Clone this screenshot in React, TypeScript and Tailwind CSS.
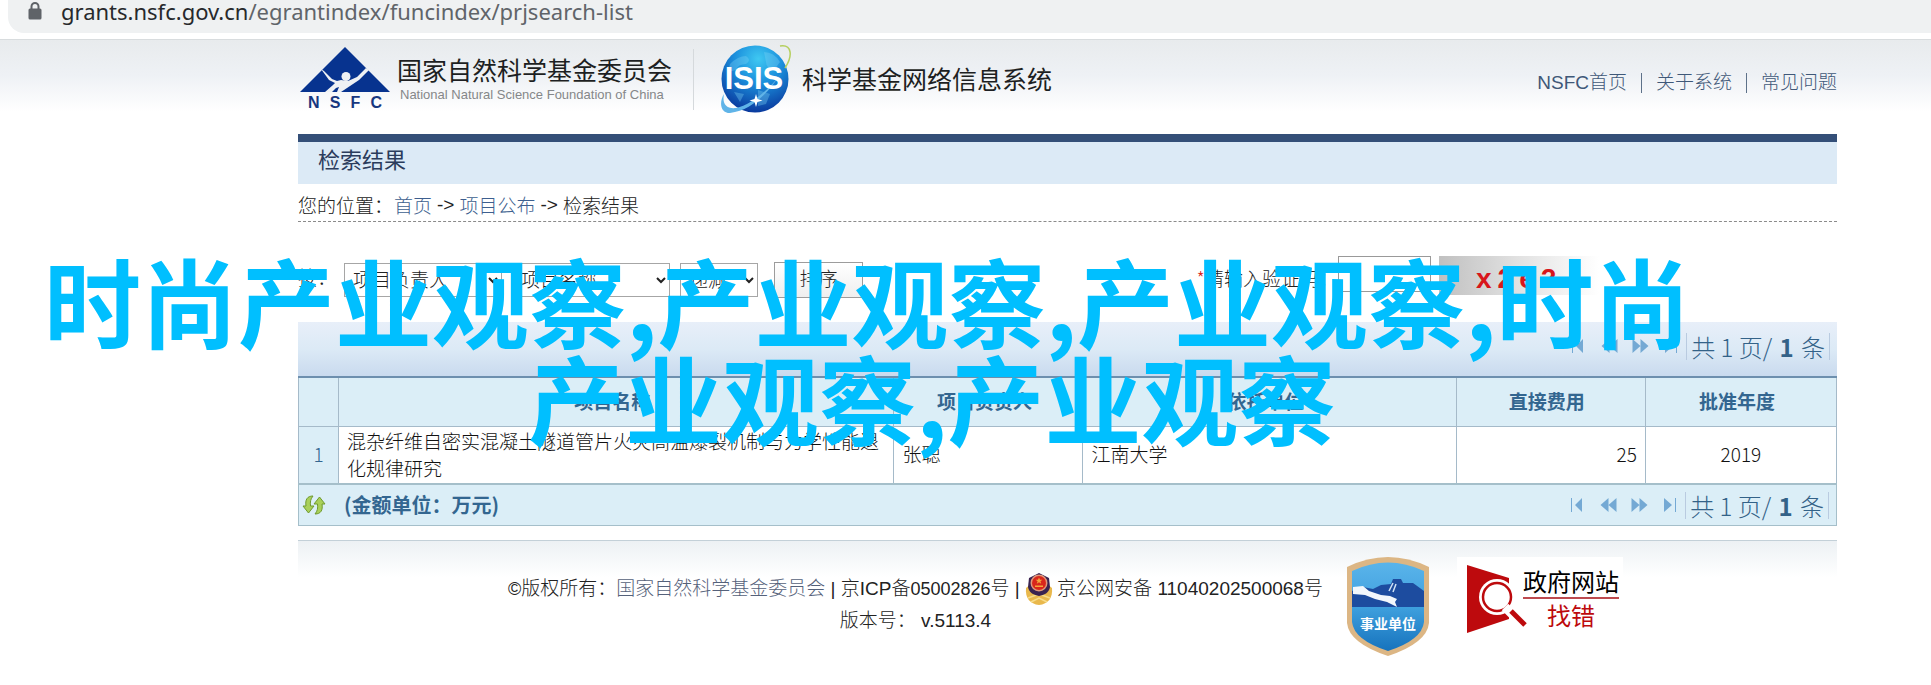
import type { ReactNode } from "react";

const cjk = "font-['Noto_Sans_CJK_SC',sans-serif]";
const arial = "font-['Liberation_Sans','Noto_Sans_CJK_SC',sans-serif]";

const columns = [
  { label: "", width: "w-10" },
  { label: "项目名称", width: "w-[555px]" },
  { label: "项目负责人", width: "w-[189px]" },
  { label: "依托单位", width: "w-[373px]" },
  { label: "直接费用", width: "w-[189px]" },
  { label: "批准年度", width: "w-[191px]" },
];

const rows = [
  {
    id: 1,
    name: "混杂纤维自密实混凝土隧道管片火灾高温爆裂机制与力学性能退化规律研究",
    leader: "张聪",
    unit: "江南大学",
    cost: 25,
    year: 2019,
  },
];

function LockIcon() {
  return (
    <svg width="14" height="18" viewBox="0 0 14 18" aria-hidden="true">
      <path d="M3.5 8V4.5a3.5 3.5 0 0 1 7 0V8" fill="none" stroke="#5f6368" strokeWidth="2" />
      <rect x="0.5" y="6.5" width="13" height="11" rx="1.5" fill="#5f6368" />
    </svg>
  );
}

function NsfcLogo() {
  return (
    <div className="w-[90px] shrink-0">
      <svg width="90" height="46" viewBox="0 0 90 46" aria-hidden="true">
        <path d="M45 0 L90 45 H0 Z" fill="#07338f" />
        <path d="M21 22 L24 24 L32 32 L37 34 L41 33 L48 34 L57 30 L66 21 L69 23 L59 33 L41 45 H37 L39 40 L36 41 L32 45 H25 L33 38 L35 36 L29 33Z" fill="#eef1f4" />
        <circle cx="46" cy="29.5" r="4.5" fill="#eef1f4" />
      </svg>
      <div className="flex justify-between px-2 pt-0.5 font-['Liberation_Sans',sans-serif] text-base font-bold leading-4 text-[#17377f]">
        <span>N</span>
        <span>S</span>
        <span>F</span>
        <span>C</span>
      </div>
    </div>
  );
}

function IsisLogo() {
  return (
    <svg width="72" height="70" viewBox="0 0 72 70" role="img" aria-label="ISIS">
      <defs>
        <radialGradient id="globe" cx="0.55" cy="0.2" r="0.8">
          <stop offset="0" stopColor="#3fc8f2" />
          <stop offset="0.45" stopColor="#1b8fdc" />
          <stop offset="1" stopColor="#0a3a9e" />
        </radialGradient>
      </defs>
      <circle cx="35" cy="35" r="33.5" fill="url(#globe)" />
      <path
        d="M10 20 q8 -8 16 -8 q6 4 0 8 q-8 0 -10 6 l-8 2z M44 8 q10 0 16 10 l-6 8 q-8 -2 -8 -8z M38 46 l12 4 l-4 10 l-8 2z M14 48 l10 2 l-4 8z"
        fill="#7fd4f5"
        opacity="0.35"
      />
      <path d="M60 2 C72 0 73 12 65 24" fill="none" stroke="#b5cf5d" strokeWidth="1.5" />
      <path d="M4 50 C2 60 6 65 16 64 C34 60 52 42 62 28 C50 46 34 66 10 69 C0 69 -1 58 4 50Z" fill="#60b4e8" />
      <text
        x="34"
        y="45"
        textAnchor="middle"
        fill="#ffffff"
        className="font-['Liberation_Sans',sans-serif] text-[31px] font-bold"
      >
        ISIS
      </text>
      <path d="M36 50 l1.5 5 l5 1.5 l-5 1.5 l-1.5 5 l-1.5 -5 l-5 -1.5 l5 -1.5z" fill="#ffffff" />
    </svg>
  );
}

function RefreshIcon() {
  return (
    <svg width="24" height="20" viewBox="0 0 24 20" aria-hidden="true">
      <path d="M11 1 C5 1 3 5 4 11 H1 L6.5 18 L12 11 H8.5 C8 7 8.5 4 11 1Z" fill="#a9d05a" stroke="#6f9a2e" />
      <path d="M13 19 C19 19 21 15 20 9 H23 L17.5 2 L12 9 H15.5 C16 13 15.5 16 13 19Z" fill="#a9d05a" stroke="#6f9a2e" />
    </svg>
  );
}

function PoliceIcon() {
  return (
    <svg width="28" height="32" viewBox="0 0 28 32" aria-hidden="true">
      <path d="M1 15 C0 25 5 31 14 32 C23 31 28 25 27 15 L22 11 H6Z" fill="#e9b84c" />
      <path d="M3 25 L14 21 L25 25 M6 29 L14 25 L22 29" stroke="#f7dd8a" strokeWidth="1.5" fill="none" />
      <path d="M14 0 L24 5 L25 14 C24 20 19 22 14 23 C9 22 4 20 3 14 L4 5Z" fill="#3a2350" />
      <circle cx="14" cy="10" r="8.5" fill="#e2997a" />
      <circle cx="14" cy="10" r="7" fill="#d8261b" />
      <path
        d="M14 4.5 l1 2.3 h2.4 l-2 1.5 l.8 2.4 l-2.2 -1.5 l-2.2 1.5 l.8 -2.4 l-2 -1.5 h2.4z M10 12.5 h8 v1.5 h-8z"
        fill="#f4a63c"
      />
    </svg>
  );
}

function InstitutionBadge() {
  return (
    <svg width="82" height="99" viewBox="0 0 82 99" role="img" aria-label="事业单位">
      <defs>
        <linearGradient id="shield" x1="0" y1="0" x2="0" y2="1">
          <stop offset="0" stopColor="#5ab4ea" />
          <stop offset="0.5" stopColor="#3fa0de" />
          <stop offset="1" stopColor="#1673bd" />
        </linearGradient>
      </defs>
      <path d="M0 10 Q41 -10 82 10 V66 Q80 86 41 99 Q2 86 0 66Z" fill="#dcb684" />
      <path d="M5 14 Q41 -3 77 14 V65 Q75 83 41 94 Q7 83 5 65Z" fill="url(#shield)" />
      <path d="M5 34 L16 30 L26 32 L34 28 L44 27 L46 22 H54 L56 26 L66 26 L77 34 V50 H5Z" fill="#1d4c9f" />
      <path d="M6 30 L16 29 L22 34 L34 38 L43 39 L50 42 L48 45 L50 50 L40 45 L28 42 L18 38 L6 37Z" fill="#f2f7fc" />
      <path d="M46 26 L42 34 M49 27 L46 35" stroke="#cfe2f4" strokeWidth="1.5" />
      <text
        x="41"
        y="72"
        textAnchor="middle"
        fill="#ffffff"
        className="font-['Noto_Sans_CJK_SC',sans-serif] text-sm font-bold"
      >
        事业单位
      </text>
    </svg>
  );
}

function FindErrorIcon() {
  return (
    <svg width="60" height="68" viewBox="0 0 60 68" aria-hidden="true">
      <path d="M0 0 L42 13 V54 L0 68Z" fill="#bd0a0d" />
      <circle cx="30" cy="32" r="18" fill="#ffffff" />
      <circle cx="30" cy="32" r="14" fill="#ffffff" stroke="#bd0a0d" strokeWidth="2.5" />
      <path d="M38 42 L58 62" stroke="#ffffff" strokeWidth="9" />
      <path d="M44 46 L58 60" stroke="#bd0a0d" strokeWidth="5" />
    </svg>
  );
}

function PagerButton({ label, children }: { label: string; children: ReactNode }) {
  return (
    <button type="button" aria-label={label} className="flex w-[17px] justify-center">
      <svg width="17" height="16" viewBox="0 0 17 16" fill="#74a9d4" aria-hidden="true">
        {children}
      </svg>
    </button>
  );
}

function Pager() {
  return (
    <div className="flex items-center">
      <div className="mr-1.5 flex items-center gap-[14px]">
        <PagerButton label="第一页">
          <path d="M2 1h1v14H2z M13 1v14L6 8z" />
        </PagerButton>
        <PagerButton label="上一页">
          <path d="M8.5 1v14L0.5 8z M16.5 1v14L8.5 8z" />
        </PagerButton>
        <PagerButton label="下一页">
          <path d="M0.5 1v14l8-7z M8.5 1v14l8-7z" />
        </PagerButton>
        <PagerButton label="最后一页">
          <path d="M2 1v14l8-7z M13 1h1v14h-1z" />
        </PagerButton>
      </div>
      <div className="border-x border-[#b9cbe0] px-1 text-2xl font-light leading-[27px] text-[#336288]">
        共 1 页/ <b className="mx-0.5 font-bold">1</b> 条
      </div>
    </div>
  );
}

export default function App() {
  return (
    <div className={`relative min-h-screen overflow-hidden bg-white ${cjk}`}>
      <div className="h-[39px]">
        <div className="ml-2 flex h-[33px] items-start gap-[19px] rounded-bl-2xl bg-[#eff1f2] pl-5 font-['Noto_Sans',sans-serif] text-[#606469]">
          <span className="mt-0.5">
            <LockIcon />
          </span>
          <span className="text-[22px] leading-[23px]">
            <span className="text-[#27292c]">grants.nsfc.gov.cn</span>/egrantindex/funcindex/prjsearch-list
          </span>
        </div>
      </div>

      <div className="border-t border-[#d8dcde] bg-[linear-gradient(to_bottom,#e8ebed_0px,#eef1f5_35px,#ffffff_72px)]">
        <div className="ml-[298px] mr-[94px]">
          <header className="flex h-[94px] items-center pb-4 pl-0.5">
            <NsfcLogo />
            <div className="ml-[7px] w-[280px] pt-0.5">
              <div className="text-[25px] leading-[29px] text-[#1d1f22]">国家自然科学基金委员会</div>
              <div className="pl-[3px] font-['Liberation_Sans',sans-serif] text-[13px] leading-[22px] text-[#858789]">
                National Natural Science Foundation of China
              </div>
            </div>
            <div className="ml-4 h-[61px] w-px bg-[#d5d9dc]" />
            <div className="ml-[26px]">
              <IsisLogo />
            </div>
            <div className="ml-[10px] pb-0.5 text-[25px] leading-[29px] text-[#1d1f22]">科学基金网络信息系统</div>
            <nav
              className={`ml-auto flex items-center gap-[14px] pt-2 text-[19px] font-light leading-7 text-[#3f5878] ${arial}`}
            >
              <a href="#home">NSFC首页</a>
              <span className="h-5 w-px bg-[#5d7189]" />
              <a href="#about">关于系统</a>
              <span className="h-5 w-px bg-[#5d7189]" />
              <a href="#faq">常见问题</a>
            </nav>
          </header>

          <h1 className="h-[50px] border-t-8 border-[#344f78] bg-[#dceaf6] pl-5 text-[22px] font-normal leading-8 text-[#2b3c5c]">
            检索结果
          </h1>

          <div className="flex h-[38px] items-center gap-[5px] border-b border-dashed border-[#8b8b8b] pt-1 text-[19px] font-light leading-7 text-[#222222]">
            <span className="-mr-1">您的位置：</span>
            <a href="#home" className="text-[#3d5f8f]">首页</a>
            <span className="font-['Liberation_Sans',sans-serif] text-[19px] font-normal">-&gt;</span>
            <a href="#projects" className="text-[#3d5f8f]">项目公布</a>
            <span className="font-['Liberation_Sans',sans-serif] text-[19px] font-normal">-&gt;</span>
            <span>检索结果</span>
          </div>

          <form
            className="flex h-[100px] items-start pt-[34px] text-[19px] font-light text-[#222222]"
            onSubmit={(e) => e.preventDefault()}
          >
            <div className="flex h-[47px] items-center">
              <label htmlFor="field" className="w-[46px] pb-1">按：</label>
              <select id="field" className="h-[34px] w-[158px] border border-[#a6a6a6] bg-white pb-0.5 pl-1 text-[19px]">
                <option>项目负责人</option>
              </select>
              <select
                aria-label="第二排序"
                className="ml-[10px] h-[34px] w-[158px] border border-[#a6a6a6] bg-white pb-0.5 pl-1 text-[19px]"
              >
                <option>项目名称</option>
              </select>
              <select
                aria-label="顺序"
                className="ml-[10px] h-[34px] w-[78px] border border-[#a6a6a6] bg-white pb-0.5 pl-1 text-[19px]"
              >
                <option>递减</option>
              </select>
              <button
                type="submit"
                className="ml-4 h-9 w-[89px] border border-[#9c9c9c] bg-gradient-to-b from-white to-[#eeeeee] pb-0.5"
              >
                排序
              </button>
            </div>
            <div className="ml-auto mr-[238px] flex items-start">
              <label htmlFor="code" className="leading-[44px]">
                <span className="text-[#d8261b]">*</span>请输入验证码：
              </label>
              <input id="code" type="text" className="h-9 w-[93px] border border-[#999999] bg-white" />
              <div className="ml-2 flex h-[39px] w-40 gap-1.5 bg-gradient-to-r from-[#c0c0c0] via-[#e2e2e2] to-white pl-[37px] font-['Liberation_Sans',sans-serif] text-[28px] font-bold leading-[46px] text-[#d8161b]">
                <span>x</span>
                <span>2</span>
                <span>e</span>
                <span>2</span>
              </div>
            </div>
          </form>

          <div className="flex h-[56px] items-center justify-end border-b-2 border-[#6d8fae] bg-gradient-to-b from-[#e8eff9] via-[#dceaf6] to-[#c9daee] pb-1.5 pr-[7px]">
            <Pager />
          </div>

          <table className="w-full table-fixed border-collapse border-x border-[#a5bac9] text-[19px] text-[#111111]">
            <thead>
              <tr className="h-[48px] bg-[#dbeef7] text-[#336690]">
                {columns.map((column) => (
                  <th
                    key={column.label}
                    className={`border-r border-b border-[#a5bac9] pr-2 pb-0.5 font-bold leading-7 ${column.width}`}
                  >
                    {column.label}
                  </th>
                ))}
              </tr>
            </thead>
            <tbody>
              {rows.map((row) => (
                <tr key={row.id} className="h-[57px] font-light leading-[27px]">
                  <td className="border-r border-[#a5bac9] bg-[#dbeef7] pb-0.5 text-center text-[#336690]">{row.id}</td>
                  <td className="border-r border-[#a5bac9] pb-0.5 pl-2">{row.name}</td>
                  <td className="border-r border-[#a5bac9] pb-0.5 pl-2">{row.leader}</td>
                  <td className="border-r border-[#a5bac9] pb-0.5 pl-2">{row.unit}</td>
                  <td className="border-r border-[#a5bac9] pb-0.5 pr-2 text-right">{row.cost}</td>
                  <td className="pb-0.5 text-center">{row.year}</td>
                </tr>
              ))}
            </tbody>
          </table>

          <div className="flex h-[43px] items-center border border-t-2 border-[#a5bfca] bg-[#dbeef7] pr-[7px] pl-[3px]">
            <button type="button" aria-label="刷新" className="mr-[18px]">
              <RefreshIcon />
            </button>
            <span className="mr-auto text-xl font-bold leading-7 text-[#336690]">(金额单位：万元)</span>
            <Pager />
          </div>

          <footer className="mt-[14px] flex items-start border-t border-[#c3d0d8] bg-[linear-gradient(to_bottom,#edf1f4_0px,#ffffff_36px)] pt-4 pl-[210px]">
            <div className={`pt-4 text-center text-[19px] font-light leading-8 text-[#222222] ${arial}`}>
              <p className="flex items-center whitespace-pre">
                <span className="text-lg">©</span>
                版权所有：
                <a href="#nsfc" className="text-[#55617a]">国家自然科学基金委员会</a>
                <span> | </span>京ICP备<span className="text-lg">05002826</span>号
                <span> | </span>
                <PoliceIcon />
                <span className="ml-1">京公网安备</span>
                <span> 11040202500068</span>号
              </p>
              <p className="whitespace-pre">版本号： v.5113.4</p>
            </div>
            <a href="#badge" className="ml-6">
              <InstitutionBadge />
            </a>
            <a href="#report" className="ml-7 flex bg-white pt-2 pr-1 pl-[10px]">
              <FindErrorIcon />
              <span className="-ml-1 flex flex-col items-center text-2xl leading-8">
                <span className="border-b-2 border-[#bd4a4f] text-black">政府网站</span>
                <span className="text-[#bd0a0d]">找错</span>
              </span>
            </a>
          </footer>
        </div>
      </div>

      <div className="pointer-events-none absolute top-[250px] left-0 text-[97px] font-bold leading-[97px] whitespace-nowrap text-[#00bfff]">
        <p className="pl-11">时尚产业观察,产业观察,产业观察,时尚</p>
        <p className="pl-[528px]">产业观察,产业观察</p>
      </div>
    </div>
  );
}
